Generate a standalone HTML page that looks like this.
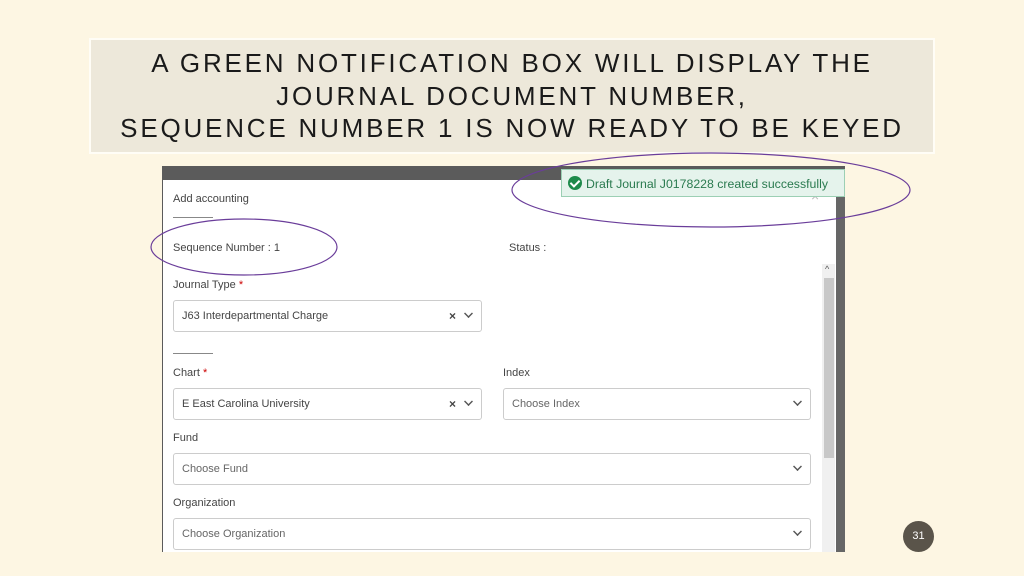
<!DOCTYPE html>
<html><head><style>
*{margin:0;padding:0;box-sizing:border-box}
body{width:1024px;height:576px;background:#fdf6e3;position:relative;overflow:hidden;font-family:"Liberation Sans",sans-serif}
.title{position:absolute;left:89px;top:38px;width:846px;height:116px;background:#ede8da;border:2px solid #fffdf6;text-align:center;font-size:26px;line-height:32px;letter-spacing:2.8px;color:#1a1a1a}
.title div{position:absolute;left:0;right:0}
.shot{position:absolute;left:162px;top:166px;width:683px;height:386px;background:#5b5b5b;overflow:hidden}
.modal{position:absolute;left:1px;top:14px;width:673px;height:380px;background:#fff}
.l{position:absolute;font-size:11px;color:#444}
.box{position:absolute;height:32px;border:1px solid #ccc;border-radius:3px;font-size:11px;color:#444;padding:9px 8px}
.box .ch{position:absolute;right:8px;top:8px;width:9px;height:9px;border-right:2px solid #555;border-bottom:2px solid #555;transform:rotate(45deg) scale(.7)}
.x{position:absolute;right:25px;top:8px;font-size:12px;color:#444;font-weight:bold}
.ph{color:#666}
.rule{position:absolute;height:1px;background:#888}
.toast{position:absolute;left:561px;top:169px;width:284px;height:28px;background:#e5f3ec;border:1px solid #9ccfb4;font-size:12.3px;color:#2a7a4f;padding:6px 6px;white-space:nowrap}
.chk{display:inline-block;width:14px;height:14px;border-radius:50%;background:#1e8a4b;vertical-align:-2px;margin-right:4px;position:relative}
.chk:after{content:"";position:absolute;left:4px;top:2px;width:4px;height:7px;border-right:2px solid #fff;border-bottom:2px solid #fff;transform:rotate(45deg)}
.num{position:absolute;left:903px;top:521px;width:31px;height:31px;border-radius:50%;background:#5a544a;color:#fff;font-size:11px;text-align:center;line-height:31px}
</style></head><body>
<div class="title">
<div style="top:7px">A GREEN NOTIFICATION BOX WILL DISPLAY THE</div>
<div style="top:40px">JOURNAL DOCUMENT NUMBER,</div>
<div style="top:72px">SEQUENCE NUMBER 1 IS NOW READY TO BE KEYED</div>
</div>
<div class="shot">
<div style="position:absolute;left:674px;top:14px;width:9px;height:372px;background:#666"></div>
<div class="modal">
<div class="l" style="left:10px;top:13px">Add accounting</div>
<div class="rule" style="left:10px;top:37px;width:40px"></div>
<div style="position:absolute;left:648px;top:8px;color:#bbb;font-size:14px">×</div>
<div class="l" style="left:10px;top:62px">Sequence Number : 1</div>
<div class="l" style="left:346px;top:62px">Status :</div>
<div class="l" style="left:10px;top:99px">Journal Type <span style="color:#c00">*</span></div>
<div class="box" style="left:10px;top:120px;width:309px">J63 Interdepartmental Charge<span class="x">×</span><span class="ch"></span></div>
<div class="rule" style="left:10px;top:173px;width:40px"></div>
<div class="l" style="left:10px;top:187px">Chart <span style="color:#c00">*</span></div>
<div class="l" style="left:340px;top:187px">Index</div>
<div class="box" style="left:10px;top:208px;width:309px">E East Carolina University<span class="x">×</span><span class="ch"></span></div>
<div class="box ph" style="left:340px;top:208px;width:308px">Choose Index<span class="ch"></span></div>
<div class="l" style="left:10px;top:252px">Fund</div>
<div class="box ph" style="left:10px;top:273px;width:638px">Choose Fund<span class="ch"></span></div>
<div class="l" style="left:10px;top:317px">Organization</div>
<div class="box ph" style="left:10px;top:338px;width:638px">Choose Organization<span class="ch"></span></div>
<div style="position:absolute;left:659px;top:84px;width:13px;height:296px;background:#f0f0f0"></div>
<div style="position:absolute;left:661px;top:98px;width:10px;height:180px;background:#c8c8c8"></div>
<div style="position:absolute;left:662px;top:84px;font-size:9px;color:#555">^</div>
</div>
</div>
<div class="toast"><span class="chk"></span>Draft Journal J0178228 created successfully</div>
<svg width="1024" height="576" style="position:absolute;left:0;top:0">
<ellipse cx="711" cy="190" rx="199" ry="37" fill="none" stroke="#6a3d9a" stroke-width="1.2"/>
<ellipse cx="244" cy="247" rx="93" ry="28" fill="none" stroke="#6a3d9a" stroke-width="1.2"/>
</svg>
<div class="num">31</div>
</body></html>
